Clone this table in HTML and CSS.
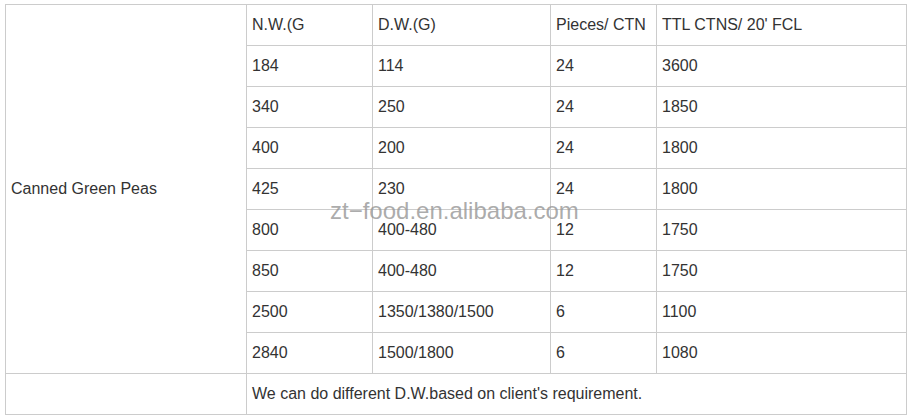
FILE: index.html
```html
<!DOCTYPE html>
<html>
<head>
<meta charset="utf-8">
<link rel="stylesheet" href="styles.css">
</head>
<body>
<div class="wrap">
<table class="spec">
  <colgroup>
    <col class="c1"><col class="c2"><col class="c3"><col class="c4"><col class="c5">
  </colgroup>
  <tr><td rowspan="9">Canned Green Peas</td><td>N.W.(G</td><td>D.W.(G)</td><td>Pieces/ CTN</td><td>TTL CTNS/ 20' FCL</td></tr>
  <tr><td>184</td><td>114</td><td>24</td><td>3600</td></tr>
  <tr><td>340</td><td>250</td><td>24</td><td>1850</td></tr>
  <tr><td>400</td><td>200</td><td>24</td><td>1800</td></tr>
  <tr><td>425</td><td>230</td><td>24</td><td>1800</td></tr>
  <tr><td>800</td><td>400-480</td><td>12</td><td>1750</td></tr>
  <tr><td>850</td><td>400-480</td><td>12</td><td>1750</td></tr>
  <tr><td>2500</td><td>1350/1380/1500</td><td>6</td><td>1100</td></tr>
  <tr><td>2840</td><td>1500/1800</td><td>6</td><td>1080</td></tr>
  <tr><td></td><td colspan="4">We can do different D.W.based on client's requirement.</td></tr>
</table>
<div class="watermark">zt−food.en.alibaba.com</div>
</div>
</body>
</html>
```
FILE: styles.css
```css
html, body {
  margin: 0;
  padding: 0;
  background: #fff;
}
.wrap {
  position: relative;
  padding: 4px 0 0 5px;
}
.spec {
  border-collapse: collapse;
  table-layout: fixed;
  width: 901px;
  font-family: "Liberation Sans", Arial, sans-serif;
  font-size: 16px;
  color: #333;
}
.c1 { width: 241px; }
.c2 { width: 126px; }
.c3 { width: 178px; }
.c4 { width: 106px; }
.c5 { width: 250px; }
.spec td {
  border: 1px solid #ccc;
  padding: 0 5px;
  vertical-align: middle;
  white-space: nowrap;
  box-sizing: border-box;
}
.spec tr td { height: 41px; }
.watermark {
  position: absolute;
  left: 330px;
  top: 197px;
  font-family: "Liberation Sans", Arial, sans-serif;
  font-size: 24px;
  line-height: 28px;
  color: rgba(150, 150, 150, 0.8);
  pointer-events: none;
}
```
